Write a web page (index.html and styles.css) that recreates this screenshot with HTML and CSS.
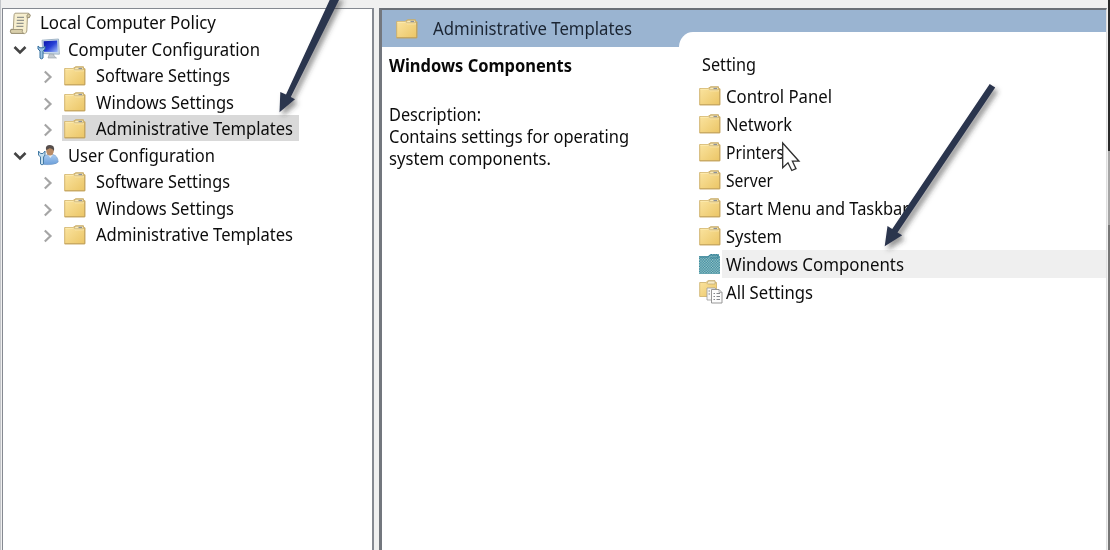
FILE: index.html
```html
<!DOCTYPE html>
<html lang="en">
<head>
<meta charset="utf-8">
<title>Local Group Policy Editor</title>
<link rel="stylesheet" href="styles.css">
</head>
<body>
<svg width="0" height="0" class="defs">
  <defs>
    <linearGradient id="gold" x1="0" y1="0" x2="1" y2="1"><stop offset="0" stop-color="#fbe5a2"/><stop offset="1" stop-color="#ebc565"/></linearGradient>
    <linearGradient id="screen" x1="0" y1="0" x2="1" y2="1"><stop offset="0" stop-color="#0812a8"/><stop offset=".5" stop-color="#2740d6"/><stop offset="1" stop-color="#a9c4fa"/></linearGradient>
    <linearGradient id="shirt" x1="0" y1="0" x2="0" y2="1"><stop offset="0" stop-color="#a9cbf0"/><stop offset="1" stop-color="#6c9fda"/></linearGradient>
    <pattern id="dither" width="2.6" height="2.6" patternUnits="userSpaceOnUse"><rect width="2.6" height="2.6" fill="#2b7d9c"/><rect width="1.3" height="1.3" fill="#a9d2cb"/><rect x="1.3" y="1.3" width="1.3" height="1.3" fill="#a9d2cb"/></pattern>
    <filter id="shadow" x="-30%" y="-30%" width="160%" height="160%"><feDropShadow dx="3" dy="4" stdDeviation="2.5" flood-color="#333" flood-opacity=".5"/></filter>
    <symbol id="folder" viewBox="0 0 22 20">
      <path d="M.7 2.5H9L11.5.8H19.5V2.5H20.8V18.8H.7Z" fill="url(#gold)" stroke="#cdae65" stroke-width=".9"/>
      <path d="M1.3 3.2H9.5L11 4.8H20" fill="none" stroke="#fff0bd" stroke-width=".8"/>
      <path d="M10 3.3L11.7 1.2H19.3V3.8H10.6Z" fill="#f9eab9" stroke="#b69c62" stroke-width=".6"/>
      <path d="M14.5 2.5H18" stroke="#8d9299" stroke-width="1.2"/>
      <path d="M.7 18.8H20.8V3" fill="none" stroke="#bf9c53" stroke-width=".8"/>
    </symbol>
    <symbol id="open" viewBox="0 0 16 12"><path d="M2.5 3L8 8.5L13.5 3" fill="none" stroke="#444" stroke-width="2.6"/></symbol>
    <symbol id="closed" viewBox="0 0 10 14"><path d="M1.8 1.5L7.5 7L1.8 12.5" fill="none" stroke="#a5a5a5" stroke-width="2.2"/></symbol>
  </defs>
</svg>
<div class="window">
  <nav class="tree">
    <div class="row root"><svg class="icon" viewBox="0 0 23 23"><path d="M6 1.2H19.5Q22 2.4 20.5 5.5L18.4 5.8L17.8 19Q17 22.3 14 21.5H2.2Q.5 19 2 17.3H4.3L5 4Q5 1.8 6 1.2Z" fill="#f7efcf" stroke="#aaa082"/><path d="M18 5.7Q17 2.5 20 1.7Q22.3 3 20.3 5.5ZM2 17.5H13.5Q12.5 20 14.5 21.4H2.5Q.7 19.5 2 17.5Z" fill="#d9cfab" stroke="#91886d" stroke-width=".8"/><path d="M8 5.4H15M7.8 8.4H15M7.6 11.4H14.6M7.4 14.4H14.4" stroke="#92948d" stroke-width="1.2"/></svg><span class="w-root">Local Computer Policy</span></div>
    <div class="row branch"><svg class="down"><use href="#open"/></svg><svg class="icon" viewBox="0 0 23 23"><path d="M5 2.2L21.5 1L22.4 16.2L6 15.5Z" fill="#cbdbe9" stroke="#91a7bc" stroke-width=".8"/><path d="M6.6 3.3L20.2 2.5L20.8 14.3L7 13.8Z" fill="url(#screen)"/><path d="M12.3 16L17 16.4V18L19.5 20H11Z" fill="#c4cbd1" stroke="#929ca5" stroke-width=".6"/><path d="M1 8V11L3 13V20Q4.5 21.7 6 20V13L8 11V8L6 9.8H3Z" fill="#9ac3e3" stroke="#356f9e" stroke-width="1"/></svg><span class="w-comp">Computer Configuration</span></div>
    <div class="row leaf"><svg class="right"><use href="#closed"/></svg><div class="item"><svg class="folder"><use href="#folder"/></svg><span class="w-soft">Software Settings</span></div></div>
    <div class="row leaf"><svg class="right"><use href="#closed"/></svg><div class="item"><svg class="folder"><use href="#folder"/></svg><span class="w-win">Windows Settings</span></div></div>
    <div class="row leaf"><svg class="right"><use href="#closed"/></svg><div class="item selected"><svg class="folder"><use href="#folder"/></svg><span class="w-admin">Administrative Templates</span></div></div>
    <div class="row branch"><svg class="down"><use href="#open"/></svg><svg class="icon" viewBox="0 0 23 23"><path d="M6.5 20.5Q5 11 11 10.5H16Q21 12 21.2 18Q18 21.2 6.5 20.5Z" fill="url(#shirt)" stroke="#739ac6" stroke-width=".6"/><path d="M11 10.5L13.3 14L16 10.5Z" fill="#e8eef5"/><ellipse cx="13" cy="6.8" rx="3.8" ry="4.8" fill="#b88b66"/><path d="M9 6Q8 1 13 1Q18 1 17 7Q15.5 4 12.5 4.2Q11 5.3 9 6Z" fill="#554d4b"/><path d="M1.5 7V11L3.5 13V20Q5 21.8 6.5 20V13L8 11V7L6 9.5H3.5Z" fill="#c3deef" stroke="#447aa4" stroke-width="1"/></svg><span class="w-user">User Configuration</span></div>
    <div class="row leaf"><svg class="right"><use href="#closed"/></svg><div class="item"><svg class="folder"><use href="#folder"/></svg><span class="w-soft">Software Settings</span></div></div>
    <div class="row leaf"><svg class="right"><use href="#closed"/></svg><div class="item"><svg class="folder"><use href="#folder"/></svg><span class="w-win">Windows Settings</span></div></div>
    <div class="row leaf"><svg class="right"><use href="#closed"/></svg><div class="item"><svg class="folder"><use href="#folder"/></svg><span class="w-admin">Administrative Templates</span></div></div>
  </nav>
  <main class="pane">
    <header class="banner"><svg class="folder"><use href="#folder"/></svg><span class="w-banner">Administrative Templates</span></header>
    <div class="content">
      <section class="details"><h1><span class="w-title">Windows Components</span></h1><div><span class="w-desc">Description:</span></div><div><span class="w-line1">Contains settings for operating</span></div><div><span class="w-line2">system components.</span></div></section>
      <section class="settings">
        <div class="column-title"><span class="w-setting">Setting</span></div>
        <div class="entry"><svg class="folder"><use href="#folder"/></svg><span class="w-control">Control Panel</span></div>
        <div class="entry"><svg class="folder"><use href="#folder"/></svg><span class="w-network">Network</span></div>
        <div class="entry"><svg class="folder"><use href="#folder"/></svg><span class="w-printers">Printers</span></div>
        <div class="entry"><svg class="folder"><use href="#folder"/></svg><span class="w-server">Server</span></div>
        <div class="entry"><svg class="folder"><use href="#folder"/></svg><span class="w-start">Start Menu and Taskbar</span></div>
        <div class="entry"><svg class="folder"><use href="#folder"/></svg><span class="w-system">System</span></div>
        <div class="entry current"><svg class="folder" viewBox="0 0 22 20"><path d="M0 2H9L11.5 0H20V2H21V20H0Z" fill="url(#dither)"/><path d="M.5 3H9L11 1H19V4H11" fill="none" stroke="#287590" stroke-width=".7"/></svg><div class="highlight"><span class="w-components">Windows Components</span></div></div>
        <div class="entry"><svg class="all-icon" viewBox="0 0 25 24"><path d="M.7 2.5H7L9 .7H16V2.5H17.5V16.5H.7Z" fill="url(#gold)" stroke="#cbae68" stroke-width=".8"/><path d="M8 3.2L9.5 1H16V4H8.5Z" fill="#f8ebc5" stroke="#b39d6d" stroke-width=".6"/><path d="M8 8H16L18 10V20H8Z" fill="#f8f8f8" stroke="#999" stroke-width=".8"/><path d="M12.5 9.5H20L23 12.5V23H12.5Z" fill="#fcfcfc" stroke="#8c8c8c" stroke-width=".9"/><path d="M20 9.5V12.5H23" fill="none" stroke="#999" stroke-width=".7"/><path d="M14.5 13.5H16M17.5 13.5H21M14.5 16.5H16M17.5 16.5H21M14.5 19.5H16M17.5 19.5H21M9.5 11H11M9.5 14H11" stroke="#83868b" stroke-width="1"/></svg><span class="w-all">All Settings</span></div>
      </section>
    </div>
  </main>
  <aside class="edge"><i></i><i></i><i></i></aside>
</div>
<svg class="annotations" viewBox="0 0 1110 550">
  <g filter="url(#shadow)" fill="#2b344d"><path d="M331.5 -4H341L290.8 97L295 99.3L279.5 112.3L280.3 92L286 94.5Z"/><path d="M989.7 84L995.2 87.5L897.5 232.5L902.2 235.2L884.7 246.2L887.5 226L892.2 228.9Z"/></g>
  <path d="M782.7 143V167.8L788 162.8L791.8 170.5L796 168.6L792.4 161.2H799Z" fill="#fff" stroke="#303030" stroke-width="1.3"/>
</svg>
<script src="fit.js"></script>
</body>
</html>
```
FILE: styles.css
```css
* { box-sizing: border-box; }
body { margin: 0; width: 1110px; height: 550px; overflow: hidden; background: #f0f0f0; color: #0c0c0c; font: 17.6px/22px "Noto Sans", "Open Sans", sans-serif; }
.defs { position: absolute; }
.window { display: flex; width: 1110px; height: 550px; padding: 8px 0 0 1px; border-left: 1px solid #c4c6ca; }
.tree { width: 372px; flex: none; border: 1px solid #858991; border-right-width: 2px; border-bottom: 0; background: #fff; padding-top: 0; }
.row { display: flex; align-items: center; height: 26.5px; }
.root { padding-left: 6px; }
.branch { padding-left: 9px; }
.leaf { padding-left: 40px; }
.icon { width: 23px; height: 23px; flex: none; margin-top: 2px; }
.root .icon { margin-right: 8px; }
.branch .icon { margin: 2px 8px 0 9px; }
.down { width: 16px; height: 12px; margin-top: 2px; }
.right { width: 10px; height: 14px; margin: 4px 9px 0 0; }
.folder { width: 22px; height: 20px; flex: none; }
.item { display: flex; align-items: center; height: 26px; padding: 0 6px 0 2px; }
.item .folder { margin: 1px 10px 0 0; }
.selected { background: linear-gradient(#d9d9d9, #d9d9d9); }
.pane { margin-left: 5px; width: 728px; flex: none; background: #fff; border: 3px solid #73777e; border-top: 2px solid #6b7077; border-right: 1px solid #dfdfdf; border-bottom: 0; }
.banner { display: flex; align-items: center; height: 37px; background: #9ab4d1; padding-left: 14px; color: #1b2533; }
.banner .folder { margin-right: 15px; }
.banner span { margin-top: -2px; }
.content { display: flex; }
.details { width: 297px; padding: 7px 0 0 7px; }
.details h1 { font-size: 17.4px; line-height: 22px; margin: 0 0 27px; color: #080808; }
.settings { width: 427px; height: 519px; margin-top: -15px; background: #fff; border-top-left-radius: 14px 15px; padding: 21px 0 0 20px; }
.column-title { height: 29px; padding-left: 3px; }
.entry { display: flex; align-items: center; height: 28px; }
.entry .folder { margin: -1px 5px 0 0; }
.current .folder { margin-right: 1px; }
.all-icon { width: 25px; height: 24px; margin-right: 2px; }
.highlight { display: flex; align-items: center; flex: 1; height: 28px; background: #efefef; padding-left: 4px; }
span { display: inline-block; white-space: nowrap; transform-origin: left center; }
.edge { flex: 1; display: flex; flex-direction: column; align-items: flex-end; margin-top: -8px; }
.edge i { width: 2px; flex: 1; background: #777; }
.edge i:first-child { height: 151px; flex: none; background: #292929; }
.edge i:nth-child(2) { height: 74px; flex: none; background: #a6a6a6; }
.annotations { position: absolute; left: 0; top: 0; width: 1110px; height: 550px; pointer-events: none; }
```
FILE: fit.js
```js
// Keeps every label at its designed width.
const widths = { root: 176, comp: 192, soft: 134, win: 138, admin: 197, user: 147, banner: 199, title: 183, desc: 92, line1: 240, line2: 162, setting: 54, control: 106, network: 66, printers: 58, server: 47, start: 183, system: 56, components: 178, all: 87 };
for (const [name, width] of Object.entries(widths)) {
  for (const label of document.querySelectorAll('.w-' + name)) {
    const natural = label.getBoundingClientRect().width;
    label.style.width = width + 'px';
    label.style.transform = `scaleX(${width / natural})`;
    label.style.transformOrigin = 'left center';
  }
}
```
